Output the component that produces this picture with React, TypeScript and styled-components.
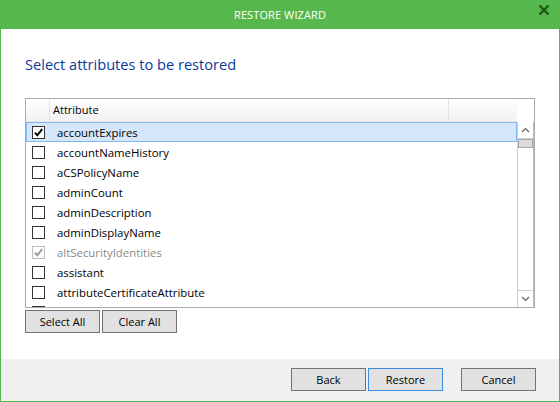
import React from "react";
import styled, { createGlobalStyle, css } from "styled-components";

const GlobalStyle = createGlobalStyle`
  html, body { margin: 0; padding: 0; background: #ffffff; }
  body { font-family: "Open Sans", "Noto Sans", sans-serif; }
  #root { width: 560px; height: 402px; }
`;

const Window = styled.div`
  width: 560px;
  height: 402px;
  display: flex;
  flex-direction: column;
  box-sizing: border-box;
  background: #ffffff;
`;

const TitleBar = styled.div`
  height: 29px;
  flex: none;
  background: #56b84c;
  display: flex;
  align-items: center;
  justify-content: center;
  position: relative;
  color: #ffffff;
  font-size: 11px;
  letter-spacing: 0.1px;
`;

const CloseButton = styled.div`
  position: absolute;
  right: 10px;
  top: 4px;
  width: 12px;
  height: 12px;
  display: flex;
  align-items: center;
  justify-content: center;
`;

const Body = styled.div`
  flex: 1;
  display: flex;
  flex-direction: column;
  border-left: 1px solid #56b84c;
  border-right: 1px solid #56b84c;
  padding: 24px 24px 0 24px;
`;

const Heading = styled.div`
  font-size: 14.6px;
  line-height: 22px;
  color: #0a3a9c;
  margin-bottom: 23px;
`;

const Table = styled.div`
  width: 510px;
  height: 210px;
  flex: none;
  box-sizing: border-box;
  border: 1px solid #acacac;
  display: grid;
  grid-template-columns: 1fr 17px;
  grid-template-rows: 23px minmax(0, 1fr);
  overflow: hidden;
`;

const HeaderRow = styled.div`
  display: grid;
  grid-template-columns: 24px 399px 68px;
  background: linear-gradient(#ffffff, #f1f2f4);
  border-bottom: 1px solid #e8e8e8;
  box-sizing: border-box;
`;

const HeaderCell = styled.div`
  border-right: 1px solid #e3e3e3;
  font-size: 11px;
  color: #000;
  display: flex;
  align-items: center;
  padding-left: 3px;
  padding-bottom: 1px;
  &:last-child { border-right: none; }
`;

const HeaderCorner = styled.div`
  background: #ffffff;
`;

const Rows = styled.div`
  display: flex;
  flex-direction: column;
  overflow: hidden;
  min-height: 0;
`;

const Row = styled.div<{ $selected?: boolean }>`
  height: 20px;
  flex: none;
  display: flex;
  align-items: center;
  box-sizing: border-box;
  border: 1px solid transparent;
  ${(p) =>
    p.$selected &&
    css`
      background: #d5e8fb;
      border-color: #83b8ec;
    `}
`;

const CheckCell = styled.div`
  width: 23px;
  flex: none;
  display: flex;
  align-items: center;
  padding-left: 5px;
  box-sizing: border-box;
`;

const Box = styled.div<{ $disabled?: boolean }>`
  width: 13px;
  height: 13px;
  box-sizing: border-box;
  border: 1px solid ${(p) => (p.$disabled ? "#bcbcbc" : "#333333")};
  background: #ffffff;
  display: flex;
  align-items: center;
  justify-content: center;
`;

const Label = styled.div<{ $disabled?: boolean }>`
  font-size: 11.4px;
  padding-left: 7px;
  color: ${(p) => (p.$disabled ? "#8a8a8a" : "#000000")};
  white-space: nowrap;
`;

const ScrollBar = styled.div`
  display: flex;
  flex-direction: column;
  border-left: 1px solid #cfcfcf;
  border-right: 1px solid #b9b9b9;
  box-sizing: border-box;
  background: #ffffff;
  min-height: 0;
`;

const ScrollButton = styled.div<{ $down?: boolean }>`
  height: 17px;
  flex: none;
  display: flex;
  align-items: center;
  justify-content: center;
  box-sizing: border-box;
  ${(p) =>
    p.$down
      ? css`border-top: 1px solid #cfcfcf;`
      : css`border-bottom: 1px solid #cfcfcf;`}
`;

const Thumb = styled.div`
  height: 9px;
  flex: none;
  box-sizing: border-box;
  background: #dcdcdc;
  border: 1px solid #a8a8a8;
`;

const Track = styled.div`
  flex: 1;
`;

const ButtonRow = styled.div`
  display: flex;
  gap: 2px;
  margin-top: 2px;
`;

const Button = styled.div<{ $focused?: boolean }>`
  width: 75px;
  height: 23px;
  box-sizing: border-box;
  background: #e1e1e1;
  border: 1px solid ${(p) => (p.$focused ? "#3d8ee2" : "#737373")};
  font-size: 11px;
  color: #000;
  display: flex;
  align-items: center;
  justify-content: center;
`;

const Footer = styled.div`
  height: 43px;
  flex: none;
  box-sizing: border-box;
  background: #f0f0f0;
  border: 1px solid #56b84c;
  border-top: none;
  display: flex;
  justify-content: flex-end;
  padding: 9px 23px 0 0;
  gap: 2px;
`;

const Spacer = styled.div`
  width: 14px;
`;

const Check = ({ color }: { color: string }) => (
  <svg width="11" height="11" viewBox="0 0 11 11">
    <path d="M1.8 5.6 L4.3 8.2 L9.2 2.2" fill="none" stroke={color} strokeWidth="1.9" />
  </svg>
);

const rows: { name: string; checked?: boolean; disabled?: boolean; selected?: boolean }[] = [
  { name: "accountExpires", checked: true, selected: true },
  { name: "accountNameHistory" },
  { name: "aCSPolicyName" },
  { name: "adminCount" },
  { name: "adminDescription" },
  { name: "adminDisplayName" },
  { name: "altSecurityIdentities", checked: true, disabled: true },
  { name: "assistant" },
  { name: "attributeCertificateAttribute" },
  { name: "" },
];

export default function App() {
  return (
    <>
      <GlobalStyle />
      <Window>
        <TitleBar>
          RESTORE WIZARD
          <CloseButton>
            <svg width="12" height="12" viewBox="0 0 12 12">
              <path d="M1.5 1.5 L10.5 10.5 M10.5 1.5 L1.5 10.5" stroke="#1d5217" strokeWidth="2.2" />
            </svg>
          </CloseButton>
        </TitleBar>
        <Body>
          <Heading>Select attributes to be restored</Heading>
          <Table>
            <HeaderRow>
              <HeaderCell />
              <HeaderCell>Attribute</HeaderCell>
              <HeaderCell />
            </HeaderRow>
            <HeaderCorner />
            <Rows>
              {rows.map((r, i) => (
                <Row key={i} $selected={r.selected}>
                  <CheckCell>
                    <Box $disabled={r.disabled}>
                      {r.checked && <Check color={r.disabled ? "#9a9a9a" : "#000000"} />}
                    </Box>
                  </CheckCell>
                  {r.name && <Label $disabled={r.disabled}>{r.name}</Label>}
                </Row>
              ))}
            </Rows>
            <ScrollBar>
              <ScrollButton>
                <svg width="9" height="6" viewBox="0 0 9 6">
                  <path d="M1 5 L4.5 1.5 L8 5" fill="none" stroke="#606060" strokeWidth="1.2" />
                </svg>
              </ScrollButton>
              <Thumb />
              <Track />
              <ScrollButton $down>
                <svg width="9" height="6" viewBox="0 0 9 6">
                  <path d="M1 1 L4.5 4.5 L8 1" fill="none" stroke="#606060" strokeWidth="1.2" />
                </svg>
              </ScrollButton>
            </ScrollBar>
          </Table>
          <ButtonRow>
            <Button>Select All</Button>
            <Button>Clear All</Button>
          </ButtonRow>
        </Body>
        <Footer>
          <Button>Back</Button>
          <Button $focused>Restore</Button>
          <Spacer />
          <Button>Cancel</Button>
        </Footer>
      </Window>
    </>
  );
}
